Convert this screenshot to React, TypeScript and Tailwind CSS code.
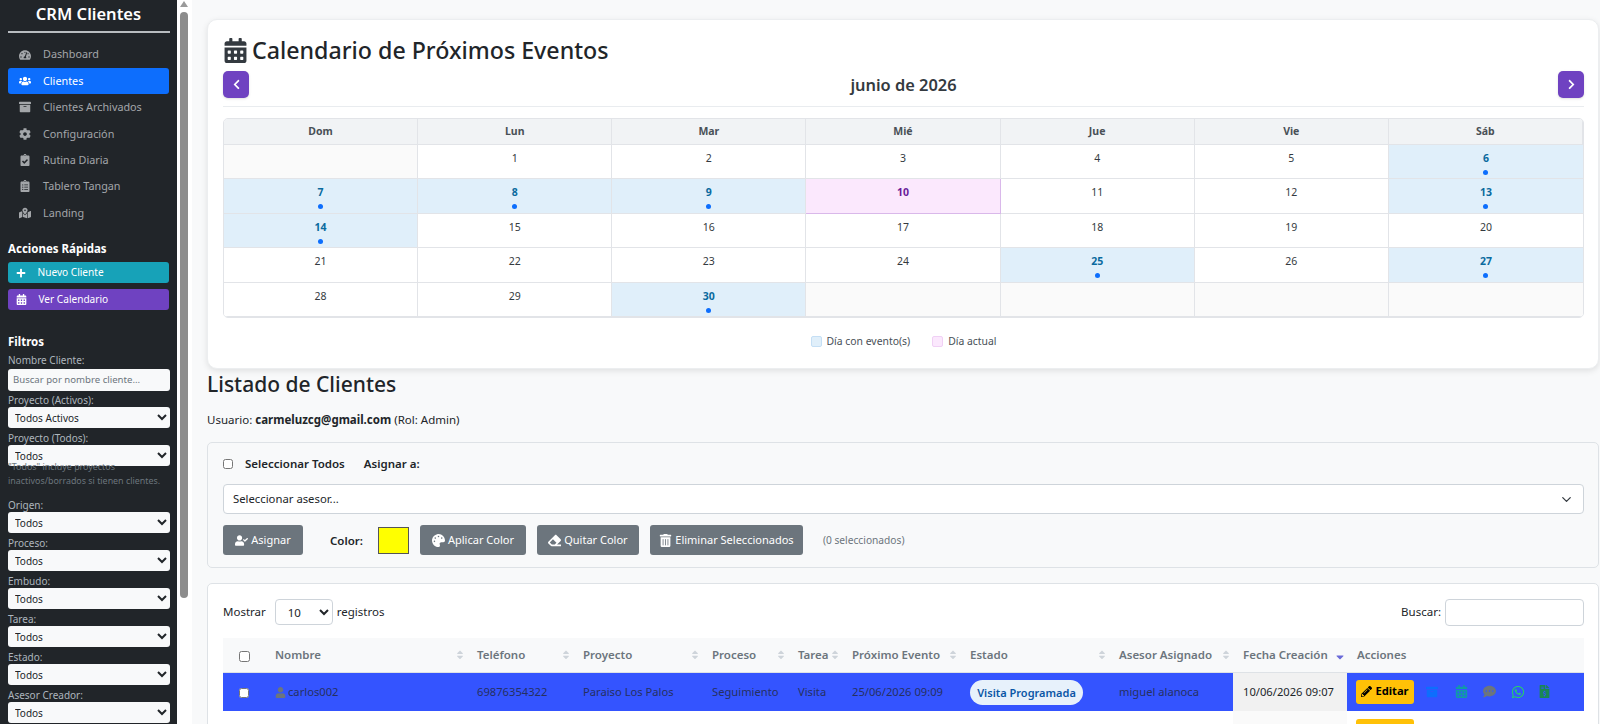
import { FaCalendarAlt, FaTachometerAlt, FaUsers, FaArchive, FaCog, FaClipboardCheck, FaClipboardList, FaMapMarkedAlt, FaPlus, FaChevronLeft, FaChevronRight, FaUserCheck, FaPalette, FaEraser, FaTrashAlt, FaUser, FaPencilAlt, FaCommentDots, FaWhatsapp, FaFileInvoiceDollar, FaCaretUp, FaCaretDown } from "react-icons/fa";
import { LuChevronDown } from "react-icons/lu";
import type { ReactNode } from "react";

const nav = [
  { label: "Dashboard", icon: <FaTachometerAlt /> },
  { label: "Clientes", icon: <FaUsers />, active: true },
  { label: "Clientes Archivados", icon: <FaArchive /> },
  { label: "Configuración", icon: <FaCog /> },
  { label: "Rutina Diaria", icon: <FaClipboardCheck /> },
  { label: "Tablero Tangan", icon: <FaClipboardList /> },
  { label: "Landing", icon: <FaMapMarkedAlt /> },
];

const days = ["Dom", "Lun", "Mar", "Mié", "Jue", "Vie", "Sáb"];
const events = [6, 7, 8, 9, 13, 14, 25, 27, 30];
const cells: (number | null)[] = [null, ...Array.from({ length: 30 }, (_, i) => i + 1), null, null, null, null];

function FilterSelect({ label, value }: { label: string; value: string }) {
  return (
    <div className="flex flex-col">
      <label className="h-[13px] text-[10px] leading-[13px] text-[#adb5bd]">{label}</label>
      <select className="h-[20.5px] w-[162px] rounded-[3px] bg-[#f8f9fa] pl-[3px] text-[10px] text-[#212529]" defaultValue={value}>
        <option>{value}</option>
      </select>
    </div>
  );
}

function GrayButton({ icon, children, className }: { icon: ReactNode; children: ReactNode; className: string }) {
  return (
    <button className={`flex h-[30px] items-center justify-center gap-[3px] rounded-[3px] bg-[#6c757d] pt-[1px] text-[11px] text-white ${className}`}>
      <span className="text-[13px]">{icon}</span>
      {children}
    </button>
  );
}

function Th({ children, sort = true, active = false }: { children?: ReactNode; sort?: boolean; active?: boolean }) {
  return (
    <th className="h-[34px] border-b border-[#dee2e6] pl-[10px] pr-[2px] text-left text-[11.5px] font-semibold text-[#6c757d]">
      <div className="flex items-center justify-between whitespace-nowrap">
        <span>{children}</span>
        {sort && (
          <span className={`flex flex-col text-[10px] leading-[5px] ${active ? "text-[#6a6ad8]" : "text-[#ced4da]"}`}>
            {active ? <FaCaretDown className="mr-[-1px] mt-[5px] text-[12px]" /> : <><FaCaretUp className="-mb-[5px]" /><FaCaretDown /></>}
          </span>
        )}
      </div>
    </th>
  );
}

export default function App() {
  return (
    <div className="flex h-[724px] w-[1600px] overflow-hidden bg-[#f8f9fa] font-['Noto_Sans','Open_Sans',sans-serif] text-[#212529]">
      <aside className="h-full w-[177px] shrink-0 overflow-hidden bg-[#212529] px-[8px]">
        <h1 className="mt-[1px] h-[26px] text-center text-[16.5px] font-semibold leading-[26px] text-white">CRM Clientes</h1>
        <div className="mt-[4px] h-[2px] w-[162px] bg-[#b8bcc0]" />
        <nav className="mt-[8.5px] flex flex-col gap-[0.4px]">
          {nav.map((n) => (
            <div key={n.label} className={`flex h-[26px] items-center rounded-[3px] pl-[10px] text-[10.8px] ${n.active ? "bg-[#0d6efd] text-white" : "text-[#a3a6a9]"}`}>
              <span className="flex w-[14px] justify-center text-[12px]">{n.icon}</span>
              <span className="ml-[11px] whitespace-nowrap">{n.label}</span>
            </div>
          ))}
        </nav>
        <div className="mt-[15px] text-[11.5px] font-bold leading-[16px] text-white">Acciones Rápidas</div>
        <div className="mt-[5px] flex flex-col gap-[6px]">
          <div className="flex h-[21px] items-center rounded-[3px] bg-[#17a2b8] pl-[8px] pt-[1px] text-[10.1px] text-white">
            <FaPlus className="text-[10px]" />
            <span className="ml-[11.5px]">Nuevo Cliente</span>
          </div>
          <div className="flex h-[21px] items-center rounded-[3px] bg-[#6f42c1] pl-[8px] pt-[1px] text-[10.1px] text-white">
            <FaCalendarAlt className="text-[11px]" />
            <span className="ml-[11.5px]">Ver Calendario</span>
          </div>
        </div>
        <div className="mt-[24px] text-[11.5px] font-bold leading-[16px] text-white">Filtros</div>
        <label className="mt-[3px] block h-[12.5px] text-[10px] leading-[14px] text-[#adb5bd]">Nombre Cliente:</label>
        <input className="h-[22px] w-[162px] rounded-[3px] bg-[#f8f9fa] pl-[5px] text-[9.6px] placeholder:text-[#6c757d]" placeholder="Buscar por nombre cliente..." />
        <div className="mt-[3.5px] flex flex-col gap-[4.5px]">
          <FilterSelect label="Proyecto (Activos):" value="Todos Activos" />
          <FilterSelect label="Proyecto (Todos):" value="Todos" />
        </div>
        <p className="relative -mt-[5.5px] whitespace-nowrap text-[8.9px] leading-[14px] text-[#6c757d]">"Todos" incluye proyectos<br />inactivos/borrados si tienen clientes.</p>
        <div className="mt-[11px] flex flex-col gap-[4.5px]">
          <FilterSelect label="Origen:" value="Todos" />
          <FilterSelect label="Proceso:" value="Todos" />
          <FilterSelect label="Embudo:" value="Todos" />
          <FilterSelect label="Tarea:" value="Todos" />
          <FilterSelect label="Estado:" value="Todos" />
          <FilterSelect label="Asesor Creador:" value="Todos" />
        </div>
      </aside>

      <div className="flex h-full w-[15px] shrink-0 flex-col items-center bg-white pr-[1px]">
        <div className="mt-[1px] h-0 w-0 border-x-[4px] border-b-[6px] border-x-transparent border-b-[#9a9a9a]" />
        <div className="mt-[5px] h-[586px] w-[8px] rounded-[4px] bg-[#8c8c8c]" />
      </div>

      <main className="min-w-0 flex-1 pl-[15px] pr-[1px] pt-[19px]">
        <section className="h-[350px] rounded-[10px] border border-[#eceef0] bg-white pl-[15px] pr-[14px] pt-[13px] shadow-[0_2px_6px_rgba(0,0,0,0.1)]">
          <h2 className="flex h-[34px] items-center gap-[2px] text-[23.2px] font-medium leading-[34px] text-[#212529]">
            <FaCalendarAlt className="text-[25px] text-[#343a40]" />
            <span className="ml-[2px]">Calendario de Próximos Eventos</span>
          </h2>
          <div className="flex h-[40px] items-start justify-between border-b border-[#e9ecef]">
            <button className="mt-[4px] flex h-[27px] w-[26px] items-center justify-center rounded-[5px] bg-[#6f42c1] text-[11px] text-white shadow"><FaChevronLeft /></button>
            <div className="mt-[5px] text-[16.4px] font-semibold leading-[26px] text-[#343a40]">junio de 2026</div>
            <button className="mt-[4px] flex h-[27px] w-[26px] items-center justify-center rounded-[5px] bg-[#6f42c1] text-[11px] text-white shadow"><FaChevronRight /></button>
          </div>
          <div className="mt-[11px] overflow-hidden rounded-[5px] border border-[#e2e4e8]">
            <div className="grid grid-cols-7">
              {days.map((d) => (
                <div key={d} className="flex h-[26px] items-center justify-center border-b border-r border-[#e2e4e8] bg-[#f1f3f5] pt-[1px] text-[10.5px] font-bold text-[#495057] last:border-r-0">{d}</div>
              ))}
              {cells.map((c, i) => {
                const ev = c !== null && events.includes(c);
                const today = c === 10;
                return (
                  <div key={i} className={`flex h-[34.4px] flex-col items-center border-b border-r pt-[5px] text-[10.5px] leading-[16px] [&:nth-child(7n)]:border-r-0 ${today ? "border-[#d9b8ea]" : "border-[#e2e4e8]"} ${c === null ? "bg-[#fafafa]" : ev ? "bg-[#e0effa] font-bold text-[#0a6a9e]" : today ? "bg-[#fbe8fd] font-bold text-[#6a1b9a]" : "bg-white text-[#343a40]"}`}>
                    {c}
                    {ev && <span className="mt-[4px] h-[5px] w-[5px] rounded-full bg-[#0d6efd]" />}
                  </div>
                );
              })}
            </div>
          </div>
          <div className="mt-[16px] flex items-center justify-center gap-[22px] text-[10.4px] text-[#495057]">
            <div className="flex items-center gap-[5px]"><span className="h-[11px] w-[11px] rounded-[2px] border border-[#c5dff5] bg-[#e0effa]" />Día con evento(s)</div>
            <div className="flex items-center gap-[5px]"><span className="h-[11px] w-[11px] rounded-[2px] border border-[#f0d0f5] bg-[#fbe8fd]" />Día actual</div>
          </div>
        </section>

        <h2 className="mt-[1px] h-[28px] text-[21px] font-medium leading-[28px] text-[#212529]">Listado de Clientes</h2>
        <p className="mt-[13px] h-[18px] text-[11.5px] leading-[18px]">Usuario: <b className="font-bold">carmeluzcg@gmail.com</b> (Rol: Admin)</p>
        <section className="mt-[13px] h-[126px] rounded-[5px] border border-[#dee2e6] bg-[#f8f9fa] pl-[15px] pr-[14px]">
          <div className="flex h-[41px] items-center text-[11.5px] font-semibold">
            <input type="checkbox" className="h-[10px] w-[10px]" />
            <span className="ml-[12px]">Seleccionar Todos</span>
            <span className="ml-[19px]">Asignar a:</span>
          </div>
          <div className="relative h-[30px] rounded-[4px] border border-[#ced4da] bg-white">
            <select className="h-full w-full appearance-none pl-[9px] text-[11.3px]"><option>Seleccionar asesor...</option></select>
            <LuChevronDown className="absolute right-[9px] top-[7px] text-[15px] text-[#343a40]" />
          </div>
          <div className="mt-[11px] flex items-center">
            <GrayButton icon={<FaUserCheck />} className="w-[80px]">Asignar</GrayButton>
            <span className="ml-[27px] pt-[1px] text-[11.5px] font-semibold">Color:</span>
            <span className="ml-[15px] h-[27px] w-[31px] border border-[#555] bg-[#ffff00]" />
            <GrayButton icon={<FaPalette />} className="ml-[11px] w-[106px]">Aplicar Color</GrayButton>
            <GrayButton icon={<FaEraser />} className="ml-[11px] w-[102px]">Quitar Color</GrayButton>
            <GrayButton icon={<FaTrashAlt />} className="ml-[11px] w-[153px]">Eliminar Seleccionados</GrayButton>
            <span className="ml-[20px] pt-[1px] text-[10.2px] text-[#6c757d]">(0 seleccionados)</span>
          </div>
        </section>
        <section className="mt-[15px] rounded-[5px] border border-[#dee2e6] bg-white pb-[20px] pl-[15px] pr-[14px]">
          <div className="flex h-[54px] items-center justify-between pt-[2px] text-[11.5px]">
            <div className="flex items-center">
              Mostrar
              <select className="ml-[9px] mr-[4px] h-[26px] w-[58px] rounded-[4px] border border-[#ced4da] bg-white pl-[8px] text-[11.5px]"><option>10</option></select>
              registros
            </div>
            <div className="flex items-center">
              Buscar:
              <input className="ml-[4px] h-[27px] w-[139px] rounded-[4px] border border-[#ced4da] bg-white" />
            </div>
          </div>
          <table className="w-[1361px] table-fixed border-collapse">
            <colgroup>
              <col className="w-[42px]" /><col className="w-[202px]" /><col className="w-[106px]" /><col className="w-[129px]" /><col className="w-[86px]" /><col className="w-[54px]" /><col className="w-[118px]" /><col className="w-[149px]" /><col className="w-[124px]" /><col className="w-[114px]" /><col className="w-[237px]" />
            </colgroup>
            <thead className="bg-[#f8f9fa]">
              <tr>
                <th className="h-[34px] border-b border-[#dee2e6]"><input type="checkbox" className="h-[11px] w-[11px] align-middle" /></th>
                <Th>Nombre</Th><Th>Teléfono</Th><Th>Proyecto</Th><Th>Proceso</Th><Th>Tarea</Th><Th>Próximo Evento</Th><Th>Estado</Th><Th>Asesor Asignado</Th><Th active>Fecha Creación</Th><Th sort={false}>Acciones</Th>
              </tr>
            </thead>
            <tbody className="text-[11.2px]">
              <tr className="h-[39px] bg-[#3454ff] text-[#26305f] [&>td:not(:last-child)]:pt-[2px]">
                <td className="text-center"><input type="checkbox" className="h-[10px] w-[10px] align-middle" /></td>
                <td className="pl-[10px]"><span className="flex items-center gap-[2px]"><FaUser className="text-[11px] text-[#6c757d]" />carlos002</span></td>
                <td className="pl-[10px]">69876354322</td>
                <td className="pl-[10px]">Paraiso Los Palos</td>
                <td className="pl-[10px]">Seguimiento</td>
                <td className="pl-[10px]">Visita</td>
                <td className="whitespace-nowrap pl-[10px]">25/06/2026 09:09</td>
                <td className="pl-[10px]"><span className="inline-flex h-[25px] w-[113px] items-center justify-center rounded-full bg-[#e7f1fb] text-[11px] font-semibold text-[#0b56a6]">Visita Programada</span></td>
                <td className="pl-[10px]">miguel alanoca</td>
                <td className="whitespace-nowrap bg-[#f1f1f1] pl-[10px] text-[#212529]">10/06/2026 09:07</td>
                <td className="pl-[9px]">
                  <div className="flex items-center">
                    <span className="flex h-[24px] w-[58px] items-center justify-center gap-[3px] rounded-[3px] bg-[#ffc107] font-bold text-black"><FaPencilAlt className="text-[11px]" />Editar</span>
                    <FaArchive className="ml-[12px] text-[12px] text-[#0d6efd]" />
                    <FaCalendarAlt className="ml-[16.5px] text-[13px] text-[#1199a8]" />
                    <FaCommentDots className="ml-[15.5px] text-[13px] text-[#6c757d]" />
                    <FaWhatsapp className="ml-[15.3px] text-[14px] text-[#25d366]" />
                    <FaFileInvoiceDollar className="ml-[13px] text-[13px] text-[#198754]" />
                  </div>
                </td>
              </tr>
              <tr className="h-[39px] bg-white">
                <td colSpan={9} />
                <td className="bg-[#fafafa]" />
                <td className="pl-[9px] pt-[8px] align-top"><span className="block h-[24px] w-[58px] rounded-[3px] bg-[#ffc107]" /></td>
              </tr>
            </tbody>
          </table>
        </section>
      </main>
    </div>
  );
}
